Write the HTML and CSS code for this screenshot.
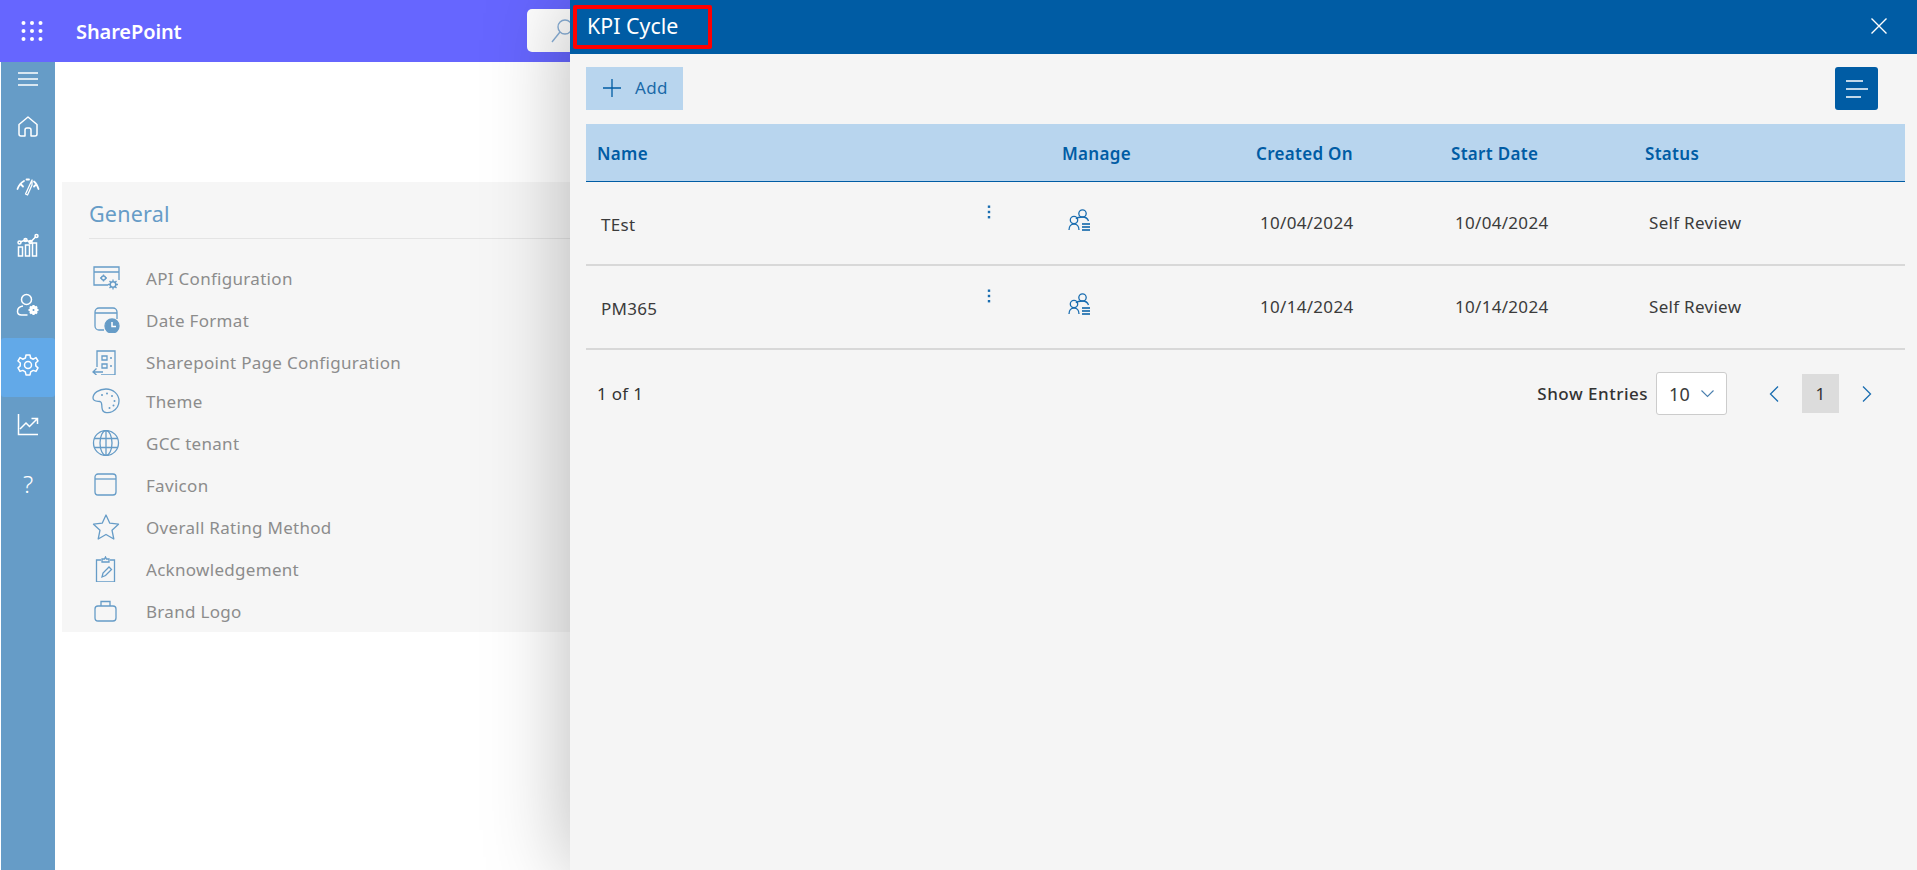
FILE: index.html
```html
<!DOCTYPE html>
<html lang="en">
<head>
<meta charset="utf-8">
<title>KPI Cycle</title>
<link rel="stylesheet" href="styles.css">
</head>
<body>
<div class="page">
  <header class="topbar">
    <svg class="waffle" width="22" height="22" viewBox="0 0 22 22" fill="#fff"><circle cx="2.5" cy="3" r="2"/><circle cx="11" cy="3" r="2"/><circle cx="19.500" cy="3" r="2"/><circle cx="2.500" cy="11" r="2"/><circle cx="11" cy="11" r="2"/><circle cx="19.500" cy="11" r="2"/><circle cx="2.500" cy="19" r="2"/><circle cx="11" cy="19" r="2"/><circle cx="19.500" cy="19" r="2"/></svg>
    <span class="brand">SharePoint</span>
    <div class="search">
      <svg width="40" height="30" viewBox="0 0 40 30" fill="none" stroke="#8ab0d8" stroke-width="1.400"><circle cx="23" cy="11" r="7"/><path d="M18 16 10 26"/></svg>
    </div>
  </header>
  <div class="main">
    <nav class="rail">
      <div class="rail-top"><svg width="20" height="14" viewBox="0 0 20 14" stroke="#fff" stroke-width="1.300"><path d="M0 1h20M0 7h20M0 13h20"/></svg></div>
      <div class="rail-item"><svg width="24" height="24" viewBox="0 0 24 24" fill="none" stroke="#fff" stroke-width="1.500" stroke-linejoin="round"><path d="M3 10.500 12 3l9 7.500V20a2 2 0 0 1-2 2h-4v-6a2 2 0 0 0-2-2h-2a2 2 0 0 0-2 2v6H5a2 2 0 0 1-2-2z"/></svg></div>
      <div class="rail-item"><svg width="24" height="24" viewBox="0 0 24 24" fill="none" stroke="#fff" stroke-width="1.800" stroke-linecap="round"><path d="M1.500 15C3 11 5 8.500 8 7M5 10.500l2 2M10.500 5.500h2.500M18 7.500c2 1.500 3.500 4.500 4.500 7.500M20 10.500l-2 2"/><path d="M16 6 9.500 20l2 1 4.500-10z" stroke-width="1.300" stroke-linejoin="round"/></svg></div>
      <div class="rail-item"><svg width="24" height="24" viewBox="0 0 24 24" fill="none" stroke="#fff" stroke-width="1.500"><path d="M2.500 14v9h4v-9zM9.500 12v11h4V12zM16.500 10v13h4V10zM4 9l5.500-2 5 2L20 3.500"/><circle cx="3.500" cy="9.500" r="1.500"/><circle cx="9.500" cy="7" r="1.500"/><circle cx="14.500" cy="9" r="1.500"/><circle cx="20.500" cy="3" r="1.500"/></svg></div>
      <div class="rail-item"><svg width="24" height="24" viewBox="0 0 24 24" fill="none" stroke="#fff" stroke-width="1.500"><circle cx="10.500" cy="6.500" r="5"/><path d="M7 13c-3.500.5-5.500 3-5.500 5.500 0 2 1.500 3.500 4 3.500h6"/><circle cx="17.500" cy="17" r="2.600" stroke-width="3.200"/><path d="M17.500 12v2.500M17.500 19.500V22M12.500 17H15M20 17h2.500M14 13.500l1.800 1.800M19.200 18.700l1.800 1.800M14 20.500l1.800-1.800M19.200 15.300l1.800-1.800" stroke-width="2.200"/></svg></div>
      <div class="rail-item active"><svg width="24" height="24" viewBox="0 0 24 24" fill="none" stroke="#fff" stroke-width="1.500" stroke-linejoin="round"><circle cx="12" cy="12" r="3.500"/><path d="M10 2h4l.6 3 2.700 1.200L20 4.600l2 3.400-2.300 2 .1 2.900 2.200 2-2 3.500-2.800-1-2.500 1.500-.7 3H10l-.7-3-2.500-1.500-2.800 1-2-3.500 2.200-2 .1-2.900L2 8l2-3.400 2.700 1.600L9.400 5z"/></svg></div>
      <div class="rail-item"><svg width="24" height="24" viewBox="0 0 24 24" fill="none" stroke="#fff" stroke-width="1.500"><path d="M2.500 2v20.500H22M4 17l6-6 3.500 3.500L21 7M15.500 6.500H21.500V12"/></svg></div>
      <div class="rail-item"><span class="help">?</span></div>
    </nav>
    <section class="content">
      <div class="card">
        <h2 class="card-title">General</h2>
        <ul class="settings">
          <li class="s-row"><svg class="s-icon" width="28" height="26" viewBox="0 0 28 26" fill="none" stroke="#669cc7" stroke-width="1.300"><path d="M16 20H2V2h25v13M2 7h25"/><circle cx="11.500" cy="13" r="2" /><path d="M11.500 9.500v1.500M11.500 15v1.500M8 13h1.500M13.500 13H15"/><circle cx="21" cy="19.500" r="2.800" stroke-width="1.500"/><path d="M21 14.500v2M21 22.500v2M16 19.500h2M24 19.500h2M17.500 16l1.500 1.500M23 21.500l1.500 1.500M17.500 23l1.500-1.500M23 17.500l1.500-1.500"/></svg><span>API Configuration</span></li>
          <li class="s-row"><svg class="s-icon" width="28" height="26" viewBox="0 0 28 26" fill="none" stroke="#669cc7" stroke-width="1.300"><path d="M12 23H7a4 4 0 0 1-4-4V5a4 4 0 0 1 4-4h14a4 4 0 0 1 4 4v7M3 6h22"/><circle cx="20" cy="19" r="7" fill="#669cc7"/><path d="M20 15v4.500h4" stroke="#fff" stroke-width="1.500"/></svg><span>Date Format</span></li>
          <li class="s-row"><svg class="s-icon" width="28" height="26" viewBox="0 0 28 26" fill="none" stroke="#669cc7" stroke-width="1.300"><path d="M5 18V2h18v24H9"/><path d="M10 7h5v4h-5zM10 15h5v4h-5zM18 9h2M18 17h2M11 23H1M4.500 19.500 1 23l3.500 3"/></svg><span>Sharepoint Page Configuration</span></li>
          <li class="s-row row-theme"><svg class="s-icon" width="28" height="26" viewBox="0 0 28 26" fill="none" stroke="#669cc7" stroke-width="1.300"><path d="M14 1C7 1 1 5 1 10c0 4 5 3 7 3.500 3 1 1 5 2.500 8.500 1 3 6 3.500 10 1.500C25 21 27 17 27 13 27 6 21 1 14 1z"/><g fill="#669cc7" stroke="none"><circle cx="10" cy="7" r="1"/><circle cx="15" cy="5.500" r="1"/><circle cx="20" cy="8" r="1"/><circle cx="22.500" cy="13" r="1"/><circle cx="21.500" cy="17.500" r="1"/><circle cx="17.500" cy="20" r="1"/></g></svg><span>Theme</span></li>
          <li class="s-row"><svg class="s-icon" width="28" height="26" viewBox="0 0 28 26" fill="none" stroke="#669cc7" stroke-width="1.300"><circle cx="14" cy="13" r="12.500"/><ellipse cx="14" cy="13" rx="6" ry="12.500"/><path d="M14 .5v25M2.500 8.500h23M2.500 17.500h23"/></svg><span>GCC tenant</span></li>
          <li class="s-row"><svg class="s-icon" width="28" height="26" viewBox="0 0 28 26" fill="none" stroke="#669cc7" stroke-width="1.300"><rect x="3" y="2" width="21" height="21" rx="3"/><path d="M3 7h21"/></svg><span>Favicon</span></li>
          <li class="s-row"><svg class="s-icon" width="28" height="26" viewBox="0 0 28 26" fill="none" stroke="#669cc7" stroke-width="1.300" stroke-linejoin="round"><path d="m14 1 3.800 8.200 8.700 1-6.500 6 1.800 8.800-7.800-4.500L6.200 25 8 16.200l-6.500-6 8.700-1z"/></svg><span>Overall Rating Method</span></li>
          <li class="s-row"><svg class="s-icon" width="28" height="26" viewBox="0 0 28 26" fill="none" stroke="#669cc7" stroke-width="1.300"><path d="M9 4H4.500v22h18V4H18M10 6V3h2.500L13.500 1l1 2H17v3z"/><path d="m10 21 1-4 6-6 2.500 2.500-6 6z"/></svg><span>Acknowledgement</span></li>
          <li class="s-row"><svg class="s-icon" width="28" height="26" viewBox="0 0 28 26" fill="none" stroke="#669cc7" stroke-width="1.300"><rect x="3" y="8" width="21" height="15" rx="3"/><path d="M9 8V3.500h9V8"/></svg><span>Brand Logo</span></li>
        </ul>
      </div>
    </section>
  </div>

  <aside class="panel">
    <div class="panel-head">
      <div class="title-box"><span class="panel-title">KPI Cycle</span></div>
      <svg class="close" width="16" height="16" viewBox="0 0 16 16" stroke="#fff" stroke-width="1.400"><path d="M.5.500l15 15M15.500.500l-15 15"/></svg>
    </div>
    <div class="panel-body">
      <div class="toolbar">
        <button class="add"><svg width="18" height="18" viewBox="0 0 18 18" stroke="#005ca4" stroke-width="1.300"><path d="M9 0v18M0 9h18"/></svg><span>Add</span></button>
        <button class="menu"><svg width="22" height="18" viewBox="0 0 22 18" stroke="#fff" stroke-width="1.500"><path d="M0 1h17M0 9h22M0 17h15"/></svg></button>
      </div>
      <div class="table">
        <div class="t-head">
          <div>Name</div><div>Manage</div><div>Created On</div><div>Start Date</div><div>Status</div>
        </div>
        <div class="t-row">
          <div class="c-name"><span class="name-text">TEst</span><svg class="dots" width="4" height="14" viewBox="0 0 4 14" fill="#1a6db0"><rect x=".8" y=".5" width="2.400" height="2.400"/><rect x=".8" y="5.800" width="2.400" height="2.400"/><rect x=".8" y="11" width="2.400" height="2.400"/></svg></div>
          <div class="c-manage"><svg width="24" height="22" viewBox="0 0 24 22" fill="none" stroke="#1a6db0" stroke-width="1.300"><circle cx="14.500" cy="4.500" r="3.700"/><path d="M8 10c1-1.500 3.500-2 6.500-2s5 1 6 4"/><circle cx="6" cy="11" r="3.700"/><path d="M1 21c0-3.500 2-6 5-6s5 2.500 5 6"/><path d="M14 15h8M14 18h8M14 21h8" stroke="#005ca4" stroke-width="1.500"/></svg></div>
          <div>10/04/2024</div><div>10/04/2024</div><div>Self Review</div>
        </div>
        <div class="t-row">
          <div class="c-name"><span class="name-text">PM365</span><svg class="dots" width="4" height="14" viewBox="0 0 4 14" fill="#1a6db0"><rect x=".8" y=".5" width="2.400" height="2.400"/><rect x=".8" y="5.800" width="2.400" height="2.400"/><rect x=".8" y="11" width="2.400" height="2.400"/></svg></div>
          <div class="c-manage"><svg width="24" height="22" viewBox="0 0 24 22" fill="none" stroke="#1a6db0" stroke-width="1.300"><circle cx="14.500" cy="4.500" r="3.700"/><path d="M8 10c1-1.500 3.500-2 6.500-2s5 1 6 4"/><circle cx="6" cy="11" r="3.700"/><path d="M1 21c0-3.500 2-6 5-6s5 2.500 5 6"/><path d="M14 15h8M14 18h8M14 21h8" stroke="#005ca4" stroke-width="1.500"/></svg></div>
          <div>10/14/2024</div><div>10/14/2024</div><div>Self Review</div>
        </div>
      </div>
      <div class="pager">
        <span class="count">1 of 1</span>
        <span class="entries">Show Entries</span>
        <div class="select"><span>10</span><svg width="13" height="8" viewBox="0 0 13 8" fill="none" stroke="#4a7fae" stroke-width="1.100"><path d="m.5.500 6 6 6-6"/></svg></div>
        <svg class="chev prev" width="10" height="16" viewBox="0 0 10 16" fill="none" stroke="#1a6db0" stroke-width="1.300"><path d="M9 .5 1.500 8 9 15.500"/></svg>
        <span class="page-num">1</span>
        <svg class="chev next" width="10" height="16" viewBox="0 0 10 16" fill="none" stroke="#1a6db0" stroke-width="1.300"><path d="m1 .5 7.500 7.500L1 15.500"/></svg>
      </div>
    </div>
  </aside>
</div>
</body>
</html>
```
FILE: styles.css
```css
* { box-sizing: border-box; }
html, body { margin: 0; height: 100%; overflow: hidden; }
body { font-family: "Noto Sans", "Open Sans", sans-serif; background: #fff; }
.page { position: relative; width: 1917px; height: 870px; overflow: hidden; }

.topbar { height: 62px; background: #6666ff; display: flex; align-items: center; padding-left: 21px; }
.waffle { flex: none; }
.brand { margin-left: 33px; font-size: 20px; font-weight: 600; color: #fff; width: 451px; letter-spacing: -.1px; }
.search { width: 500px; height: 43px; margin-top: -1px; border-radius: 5px; background: #fff; padding: 7px 0 0 15px; }

.main { display: flex; height: 808px; padding-left: 1px; }
.rail { width: 54px; flex: none; background: #669cc7; display: flex; flex-direction: column; }
.rail-top { height: 34px; display: flex; justify-content: center; align-items: center; }
.rail-item { height: 59.7px; display: flex; justify-content: center; align-items: center; }
.rail-item.active { background: #62a9e8; border-radius: 3px; height: 59px; margin: 3px 0 -2.3px; padding-bottom: 4px; }
.help { color: #fff; font-size: 24px; font-weight: 300; line-height: 1; }

.content { flex: 1; padding: 120px 12px 0 7px; }
.card { background: #f6f6f6; height: 450px; padding: 0 27px; }
.card-title { margin: 0; height: 57px; border-bottom: 1px solid #e4e4e4; font-size: 21.5px; font-weight: 400; letter-spacing: .2px; line-height: 63px; color: #669cc7; }
.settings { list-style: none; margin: 18px 0 0; padding: 0; }
.s-row { height: 42px; display: flex; align-items: center; font-size: 17px; letter-spacing: .3px; color: #8c8c8c; }
.s-row.row-theme { height: 36px; margin-bottom: 3px; }
.s-icon { flex: none; margin: 0 26px 0 3px; }

.panel { position: absolute; top: 0; right: 0; bottom: 0; width: 1347px; background: #f5f5f5; box-shadow: 0 0 80px rgba(0, 0, 0, .28); display: flex; flex-direction: column; }
.panel-head { height: 54px; flex: none; background: #005ca4; display: flex; align-items: center; justify-content: space-between; padding: 0 30px 2px 3px; }
.title-box { width: 139px; height: 44px; margin-top: 2px; border: 4px solid #f00; border-radius: 2px; padding: 0 0 3px 10px; display: flex; align-items: center; }
.panel-title { color: #fff; font-size: 21.4px; }
.close { flex: none; }

.panel-body { flex: 1; padding: 13px 12px 0 16px; }
.toolbar { display: flex; justify-content: space-between; padding-right: 27px; }
button { font-family: inherit; border: 0; cursor: pointer; }
.add { width: 97px; height: 43px; background: #b8d5ee; color: #1a6aa8; font-size: 17px; letter-spacing: .3px; display: flex; align-items: center; gap: 14px; padding: 0 0 2px 17px; }
.menu { width: 43px; height: 43px; background: #005ca4; border-radius: 3px; padding: 0; display: flex; align-items: center; justify-content: center; }

.table { margin-top: 14px; }
.t-head, .t-row { display: grid; grid-template-columns: 465px 194px 195px 194px 1fr; }
.t-head { height: 58px; background: #b8d5ee; border-bottom: 1px solid #005ca4; align-items: center; font-size: 17px; letter-spacing: .3px; font-weight: 600; color: #005ca4; padding-top: 2px; }
.t-head > div { padding-left: 11px; }
.t-row { height: 84px; border-bottom: 2px solid #d8d8d8; align-items: center; font-size: 17px; letter-spacing: .3px; color: #3b3b3b; padding-bottom: 2px; }
.t-row > div { padding-left: 15px; }
.c-name { display: flex; justify-content: space-between; padding-right: 60px; }
.name-text { padding-top: 5px; }
.dots { margin-top: -3px; }
.c-manage { height: 22px; margin-top: -4px; padding-left: 17px !important; }

.pager { display: flex; align-items: center; height: 43px; margin-top: 22px; font-size: 17px; letter-spacing: .3px; color: #333; padding-left: 11px; }
.count { flex: 1; }
.entries { margin-right: 8px; font-weight: 500; letter-spacing: .5px; }
.select { width: 71px; height: 43px; background: #fff; border: 1px solid #ccc; border-radius: 3px; display: flex; align-items: center; justify-content: space-between; padding: 0 12px; font-size: 18px; color: #3b3b3b; margin-right: 42px; }
.page-num { width: 37px; height: 39px; background: #dcdcdc; display: flex; align-items: center; justify-content: center; margin: 0 23px; }
.chev { flex: none; }
.next { margin-right: 33px; }
```
